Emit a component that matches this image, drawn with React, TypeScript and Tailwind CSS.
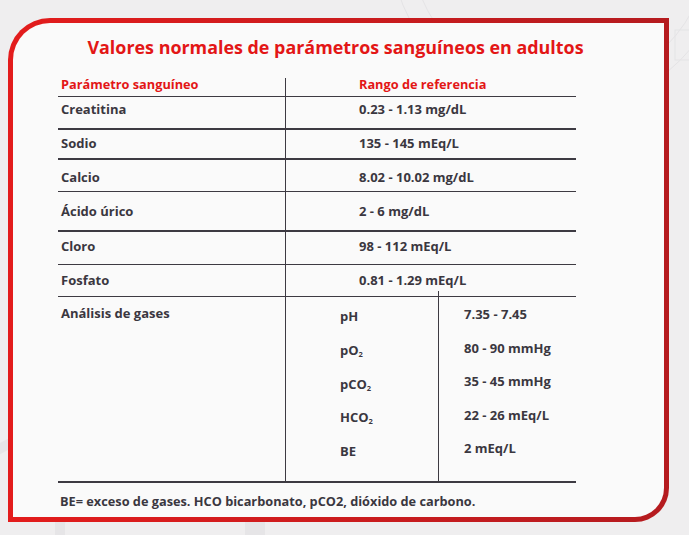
import React from "react";

const rows = [
  { name: "Creatitina", value: "0.23 - 1.13 mg/dL", row: "h-[33px] border-b-2", pad: "pt-[4px]" },
  { name: "Sodio", value: "135 - 145 mEq/L", row: "h-[30px] border-b-2", pad: "pt-[5px]" },
  { name: "Calcio", value: "8.02 - 10.02 mg/dL", row: "h-[32px] border-b", pad: "pt-[9px]" },
  { name: "Ácido úrico", value: "2 - 6 mg/dL", row: "h-[40px] border-b-2", pad: "pt-[11px]" },
  { name: "Cloro", value: "98 - 112 mEq/L", row: "h-[33px] border-b", pad: "pt-[6px]" },
  { name: "Fosfato", value: "0.81 - 1.29 mEq/L", row: "h-[32px] border-b", pad: "pt-[7px]" },
];

function Sub2({ base }: { base: string }) {
  return (
    <span>
      {base}
      <sub className="text-[7.5px] relative top-[2px]">2</sub>
    </span>
  );
}

const gases: { label: React.ReactNode; value: string }[] = [
  { label: "pH", value: "7.35 - 7.45" },
  { label: <Sub2 base="pO" />, value: "80 - 90 mmHg" },
  { label: <Sub2 base="pCO" />, value: "35 - 45 mmHg" },
  { label: <Sub2 base="HCO" />, value: "22 - 26 mEq/L" },
  { label: "BE", value: "2 mEq/L" },
];

function Backdrop() {
  return (
    <svg className="absolute inset-0 w-full h-full pointer-events-none" viewBox="0 0 689 535">
      <g fill="none" stroke="#e6e5e7" strokeWidth="10">
        <polygon points="-40,470 110,390 250,470 250,600 -40,600" />
        <polygon points="60,520 160,460 260,520 260,600 60,600" />
      </g>
      <g fill="none" stroke="#e4e3e5" strokeWidth="1">
        <circle cx="560" cy="-60" r="170" />
        <circle cx="560" cy="-60" r="150" />
        <rect x="675" y="30" width="40" height="30" />
      </g>
    </svg>
  );
}

export default function App() {
  return (
    <div
      className="relative w-[689px] h-[535px] bg-[#efeeef] overflow-hidden pt-[18px] pl-[8px]"
      style={{ fontFamily: '"Open Sans", "Noto Sans", sans-serif' }}
    >
      <Backdrop />
      <div className="relative w-[661px] h-[504px] p-[5px] rounded-tl-[42px] rounded-br-[34px] bg-gradient-to-r from-[#e31c1c] to-[#b51b1f]">
        <div className="w-full h-full bg-[#fafafa] rounded-tl-[37px] rounded-br-[29px] pt-[12px]">
          <h1 className="text-center pr-[6px] text-[17.9px] font-bold text-[#e31616] leading-[24px]">
            Valores normales de parámetros sanguíneos en adultos
          </h1>

          <div className="ml-[45px] mt-[19px] w-[518px] text-[13px] font-bold text-[#3a3740] leading-[16px]">
            {/* cabecera */}
            <div className="flex h-[19px] border-b border-[#3d3a42] text-[#e31616] text-[12.75px] leading-[12px]">
              <div className="w-[227px] pl-[3px]">Parámetro sanguíneo</div>
              <div className="w-px bg-[#3d3a42]" />
              <div className="flex-1 pl-[73px]">Rango de referencia</div>
            </div>

            {rows.map((r) => (
              <div key={r.name} className={`flex ${r.row} border-[#3d3a42]`}>
                <div className={`w-[227px] pl-[3px] ${r.pad}`}>{r.name}</div>
                <div className="w-px bg-[#3d3a42] -mb-[2px]" />
                <div className={`flex-1 pl-[73px] ${r.pad}`}>{r.value}</div>
              </div>
            ))}

            <div className="flex h-[186px] border-b-2 border-[#3d3a42]">
              <div className="w-[227px] pl-[3px] pt-[8px]">Análisis de gases</div>
              <div className="w-px bg-[#3d3a42]" />
              <div className="w-[152px] pl-[54px] pt-[11px]">
                {gases.map((g) => (
                  <div key={g.value} className="h-[33.75px]">
                    {g.label}
                  </div>
                ))}
              </div>
              <div className="w-px bg-[#3d3a42] -mt-[6px]" />
              <div className="flex-1 pl-[25px] pt-[9px]">
                {gases.map((g) => (
                  <div key={g.value} className="h-[33.5px]">
                    {g.value}
                  </div>
                ))}
              </div>
            </div>

            <p className="pl-[2px] pt-[10px] text-[12.75px] leading-[16px]">
              BE= exceso de gases. HCO bicarbonato, pCO2, dióxido de carbono.
            </p>
          </div>
        </div>
      </div>
    </div>
  );
}
